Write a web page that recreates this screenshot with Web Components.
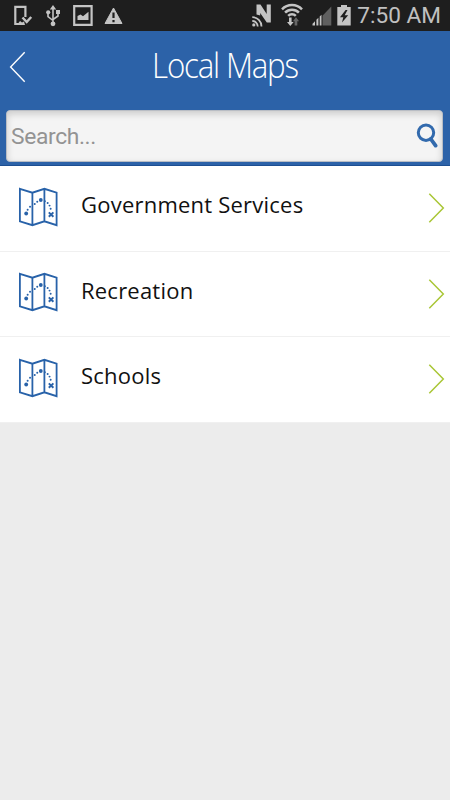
<!DOCTYPE html>
<html lang="en">
<head>
<meta charset="utf-8">
<title>Local Maps</title>
<style>
  body {
    margin: 0;
    background: #ececec;
    font-family: 'Open Sans', 'Noto Sans', sans-serif;
  }
</style>
</head>
<body>
<local-maps></local-maps>

<script>
'use strict';

const places = ['Government Services', 'Recreation', 'Schools'];

// Notification glyphs, all 31px high
const statusIcons = {
  device: {width: 20, body: `
    <path d="M6 24H2.3V6.8H12.4V17" fill="none" stroke="#c4c4c4" stroke-width="2.2"/>
    <path d="M4 25l3-4 2 1.5 2-1 1 3.5z" fill="#c4c4c4"/>
    <path d="M9.5 17.5l4.2 4.5 4.5-5" fill="none" stroke="#c4c4c4" stroke-width="2.5"/>`},
  usb: {width: 14, body: `
    <path d="M7 8v16M2 13v3.5l5 4M12 12v4l-5 3.5" fill="none" stroke="#c4c4c4" stroke-width="1.6"/>
    <path d="M3.8 9.5L7 5l3.2 4.5zM10 10h4v4h-4z" fill="#c4c4c4"/>
    <circle cx="2.2" cy="12.3" r="2.1" fill="#c4c4c4"/>
    <circle cx="7" cy="23.8" r="2.4" fill="#c4c4c4"/>`},
  image: {width: 20, body: `
    <path d="M1.2 6.2h17.4v18.6H1.2z" fill="none" stroke="#c4c4c4" stroke-width="2.2"/>
    <path d="M4.5 20v-4l3-1.5 2.5 1.8 5.5-4.5V20z" fill="#c4c4c4"/>`},
  warning: {width: 19, body: `
    <path d="M9.5 8L18 23.5H1z" fill="#c4c4c4" stroke="#c4c4c4" stroke-linejoin="round"/>
    <path d="M9.5 12.5v5.6M9.5 20v2.3" stroke="#1e1e1e" stroke-width="2.2"/>`},
  nfc: {width: 20, body: `
    <path d="M4.5 14.5V4.5h4l6.2 9.5V4.5h4.1v18h-4L8.2 13v2.6z" fill="#c4c4c4"/>
    <path d="M.3 17.2a9.2 9.2 0 0 1 9.2 9.2M.3 21a5.4 5.4 0 0 1 5.4 5.4" fill="none" stroke="#c4c4c4" stroke-width="1.8"/>
    <circle cx="1.8" cy="24.9" r="1.6" fill="#c4c4c4"/>`},
  wifi: {width: 22, body: `
    <path d="M1 9.3a14 14 0 0 1 20 0M4.1 12.6a9.6 9.6 0 0 1 13.8 0M7.2 15.8a5.3 5.3 0 0 1 7.6 0" fill="none" stroke="#c4c4c4" stroke-width="2.5"/>
    <path d="M8 17.5h2.6V22h2.1L9.3 26 6 22h2z" fill="#c4c4c4"/>
    <path d="M13.6 25.5v-4.2h-1.7l3.1-4 3.1 4h-1.8v4.2z" fill="#666"/>`},
  signal: {width: 20, body: `
    <path d="M10.5 15.8L19.3 6.5v19h-8.8z" fill="#606060"/>
    <path d="M.5 25.5v-1.8L3 21.2v4.3zM4.4 25.5v-5.7l2-2v7.7zM7.7 25.5v-9l1.8-1.8v10.8z" fill="#c4c4c4"/>`},
  battery: {width: 14, body: `
    <path d="M4 5h6v2h3.7v18.6H.3V7H4z" fill="#c4c4c4"/>
    <path d="M8.6 10L3 17.2h3.3L5 22.5l6.2-7.2H7.7L10.5 10z" fill="#1e1e1e"/>`},
};

class StatusIcon extends HTMLElement {
  connectedCallback() {
    const icon = statusIcons[this.getAttribute('name')];
    this.attachShadow({mode: 'open'}).innerHTML = `
      <style>
        :host { display: block; flex: none; height: 31px; }
        svg { display: block; }
      </style>
      <svg width="${icon.width}" height="31" viewBox="0 0 ${icon.width} 31">${icon.body}</svg>
    `;
  }
}

class StatusBar extends HTMLElement {
  constructor() {
    super();
    this.attachShadow({mode: 'open'}).innerHTML = `
      <style>
        :host {
          display: flex;
          justify-content: space-between;
          box-sizing: border-box;
          height: 31px;
          padding: 0 9px 0 13px;
          background: #1e1e1e;
          color: #c0c0c0;
          font: 22.6px/32px Roboto, sans-serif;
        }
        div { display: flex; }
        .left { gap: 13px; }
        .right { gap: 9px; }
        .time { margin-left: -3px; white-space: nowrap; }
      </style>
      <div class="left">
        <status-icon name="device"></status-icon>
        <status-icon name="usb"></status-icon>
        <status-icon name="image"></status-icon>
        <status-icon name="warning" style="margin-left: -2px"></status-icon>
      </div>
      <div class="right">
        <status-icon name="nfc"></status-icon>
        <status-icon name="wifi"></status-icon>
        <status-icon name="signal"></status-icon>
        <status-icon name="battery" style="margin-left: -4px"></status-icon>
        <span class="time"><slot></slot></span>
      </div>
    `;
  }
}

class TitleBar extends HTMLElement {
  constructor() {
    super();
    this.attachShadow({mode: 'open'}).innerHTML = `
      <style>
        :host {
          display: grid;
          grid-template-columns: 50px 1fr 50px;
          align-items: center;
          height: 72px;
          color: #fff;
        }
        h1 {
          margin: 0 0 4px;
          text-align: center;
          font-size: 34px;
          font-weight: 300;
          line-height: 60px;
          letter-spacing: -1.3px;
          white-space: nowrap;
          transform: scaleX(.92);
        }
        svg { display: block; margin-left: 8px; }
      </style>
      <svg width="20" height="34" viewBox="0 0 20 34">
        <path d="M16.7 2.3L2.6 17l14.1 14.7" fill="none" stroke="#fff" stroke-width="1.4"/>
      </svg>
      <h1><slot></slot></h1>
    `;
  }
}

class SearchBox extends HTMLElement {
  constructor() {
    super();
    this.attachShadow({mode: 'open'}).innerHTML = `
      <style>
        :host {
          display: flex;
          align-items: center;
          justify-content: space-between;
          box-sizing: border-box;
          height: 52px;
          margin: 7px 7px 4px 6px;
          padding: 0 4px 0 4px;
          border: 1px solid #b9bdc4;
          border-radius: 4px;
          background: #f4f4f4;
          box-shadow: inset 0 3px 7px rgba(0, 0, 0, .17);
          color: #939393;
          font: 22.8px/50px Roboto, sans-serif;
        }
        span { padding-top: 2px; letter-spacing: -.35px; }
        svg { display: block; }
      </style>
      <span><slot></slot></span>
      <svg width="22" height="26" viewBox="0 0 22 26" fill="none" stroke="#326aad">
        <circle cx="10" cy="9.7" r="7.7" stroke-width="3"/>
        <path d="M14.8 16l4.8 6.6" stroke-width="3.8" stroke-linecap="round"/>
      </svg>
    `;
  }
}

class MapIcon extends HTMLElement {
  constructor() {
    super();
    this.attachShadow({mode: 'open'}).innerHTML = `
      <style>
        :host { display: block; width: 40px; height: 40px; }
        svg { display: block; }
      </style>
      <svg width="40" height="40" viewBox="0 0 40 40" fill="none" stroke="#2862a9" stroke-width="1.8">
        <path d="M1.9 1.8l12.5 3.9 12-3.9 12.2 3.9v32.5l-12.2-3.9-12 3.9-12.5-3.9zM14.4 5.7v32.5M26.4 1.8v32.5"/>
        <path d="M9.6 22.7l.1 0M12 19.7l.1 0M16.7 17l.1 0M19.2 14.8l.1 0M26.8 14.2l.1 0M29.6 16l.1 0M31.5 18.6l.1 0M32.6 21.8l.1 0" stroke-width="1.9" stroke-linecap="round"/>
        <circle cx="8.2" cy="26.5" r="1.9" fill="#2862a9" stroke="none"/>
        <circle cx="22.8" cy="13" r="1.9" fill="#2862a9" stroke="none"/>
        <path d="M30.8 25.4l4.6 4.4M35.4 25.4l-4.6 4.4" stroke-width="2"/>
      </svg>
    `;
  }
}

class PlaceRow extends HTMLElement {
  constructor() {
    super();
    this.attachShadow({mode: 'open'}).innerHTML = `
      <style>
        :host {
          display: flex;
          align-items: center;
          box-sizing: border-box;
          height: 85.6px;
          padding: 0 5px 0 18px;
          border-bottom: 1px solid #f0f0f0;
          background: #fff;
          color: #111;
        }
        map-icon { margin-top: -3px; }
        .label {
          flex: 1;
          margin: -8px 0 0 23px;
          font-size: 22px;
          line-height: 30px;
          letter-spacing: .22px;
          white-space: nowrap;
        }
      </style>
      <map-icon></map-icon>
      <span class="label"><slot></slot></span>
      <svg width="17" height="32" viewBox="0 0 17 32">
        <path d="M1.3 1.7L15.3 16 1.3 30.3" fill="none" stroke="#a9c636" stroke-width="1.5"/>
      </svg>
    `;
  }
}

class LocalMaps extends HTMLElement {
  constructor() {
    super();
    this.attachShadow({mode: 'open'}).innerHTML = `
      <style>
        :host { display: block; height: 800px; overflow: hidden; }
        header {
          box-sizing: border-box;
          height: 135px;
          border-bottom: 1px solid #1d4f92;
          background: #2c62a8;
          overflow: hidden;
        }
      </style>
      <status-bar>7:50 AM</status-bar>
      <header>
        <title-bar>Local Maps</title-bar>
        <search-box>Search...</search-box>
      </header>
      <main>
        ${places.map(place => `<place-row>${place}</place-row>`).join('')}
      </main>
    `;
  }
}

customElements.define('status-icon', StatusIcon);
customElements.define('status-bar', StatusBar);
customElements.define('title-bar', TitleBar);
customElements.define('search-box', SearchBox);
customElements.define('map-icon', MapIcon);
customElements.define('place-row', PlaceRow);
customElements.define('local-maps', LocalMaps);
</script>
</body>
</html>
